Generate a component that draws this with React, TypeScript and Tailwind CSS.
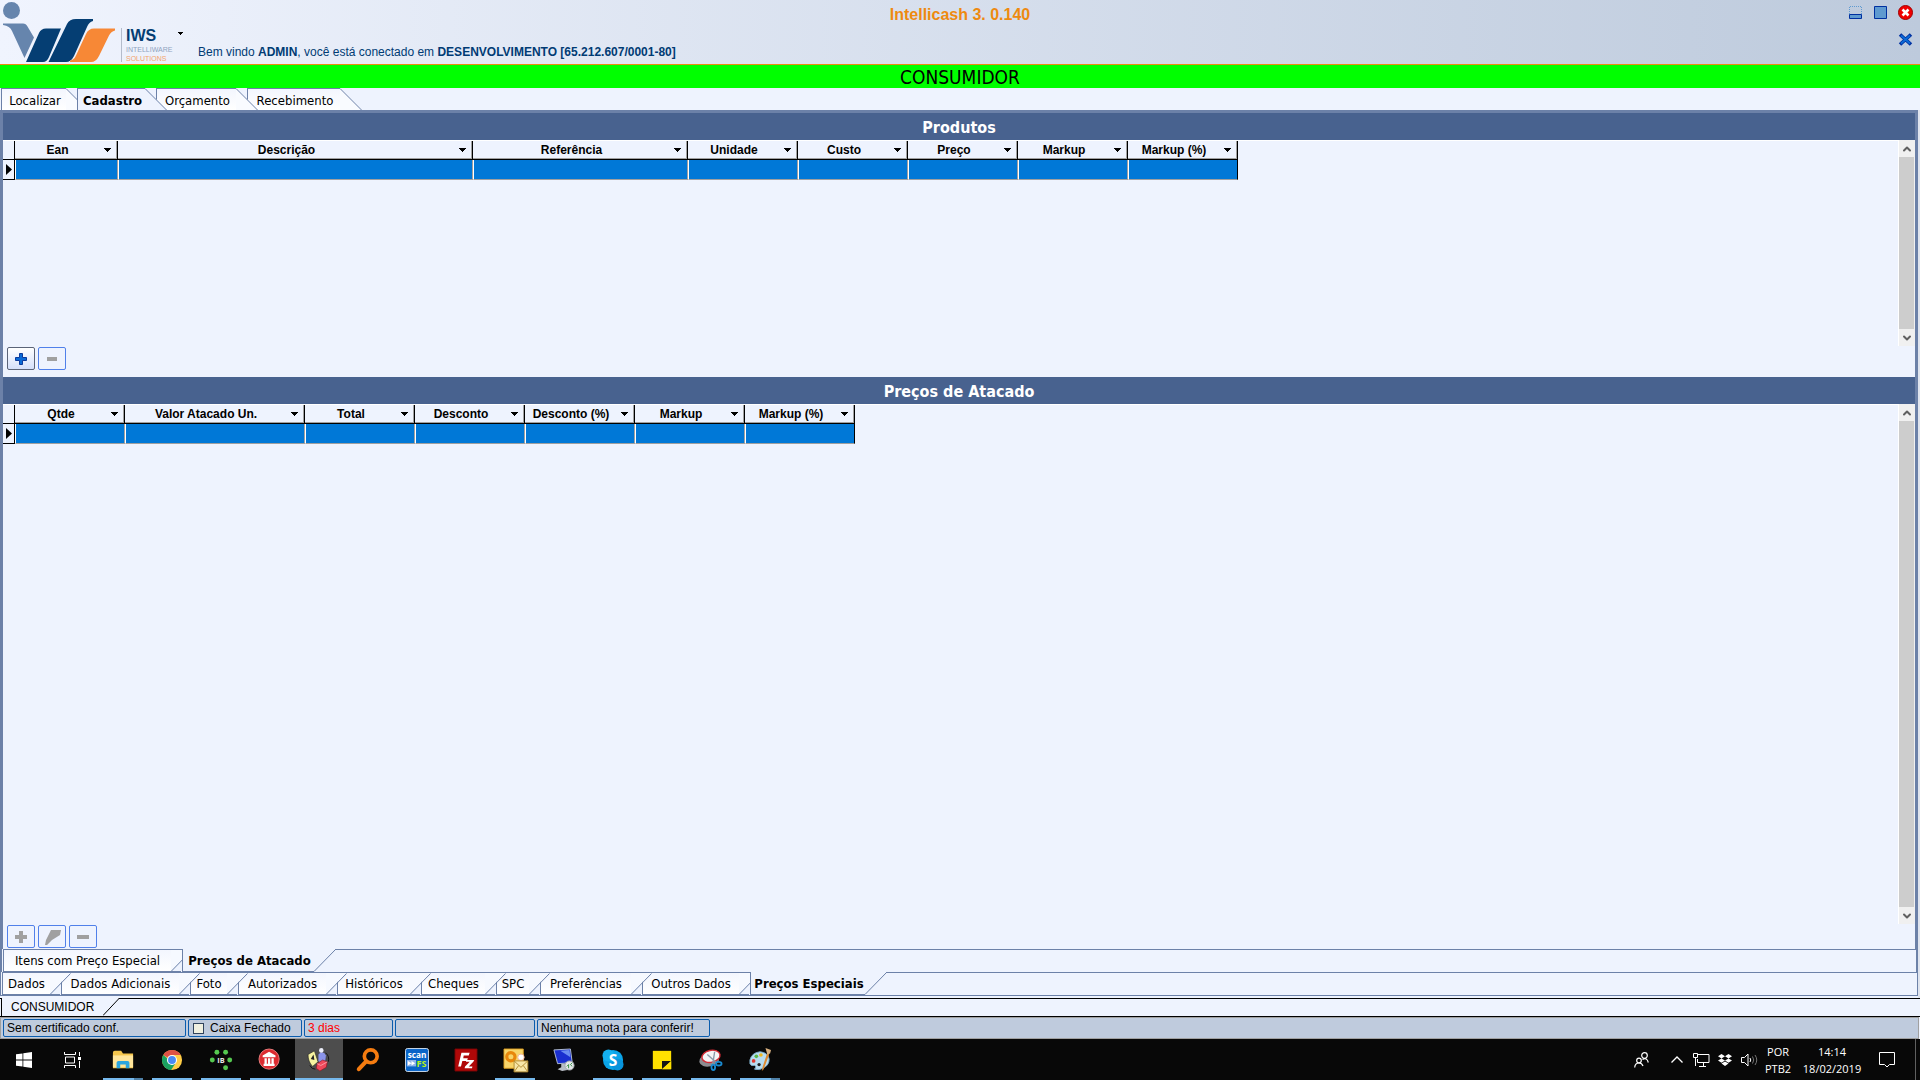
import { ChevronDown, ChevronUp } from "lucide-react";

type Tab = {
  label: string;
  width: string;
  layer?: string;
  active?: boolean;
};

type Column = {
  label: string;
  width: string;
};

const topTabs: Tab[] = [
  { label: "Localizar", width: "w-[65px]", layer: "z-10" },
  { label: "Cadastro", width: "w-[68px]", layer: "z-20", active: true },
  { label: "Orçamento", width: "w-[80px]", layer: "z-10" },
  { label: "Recebimento", width: "w-[93px]" },
];

const priceTabs: Tab[] = [
  { label: "Itens com Preço Especial", width: "w-[168px]" },
  { label: "Preços de Atacado", width: "w-[132px]", active: true },
];

const recordTabs: Tab[] = [
  { label: "Dados", width: "w-[48px]" },
  { label: "Dados Adicionais", width: "w-[118px]" },
  { label: "Foto", width: "w-[37px]" },
  { label: "Autorizados", width: "w-[88px]" },
  { label: "Históricos", width: "w-[73px]" },
  { label: "Cheques", width: "w-[64px]" },
  { label: "SPC", width: "w-[33px]" },
  { label: "Preferências", width: "w-[91px]" },
  { label: "Outros Dados", width: "w-[97px]" },
  { label: "Preços Especiais", width: "w-[115px]", active: true },
];

const productColumns: Column[] = [
  { label: "Ean", width: "w-[103px]" },
  { label: "Descrição", width: "w-[355px]" },
  { label: "Referência", width: "w-[215px]" },
  { label: "Unidade", width: "w-[110px]" },
  { label: "Custo", width: "w-[110px]" },
  { label: "Preço", width: "w-[110px]" },
  { label: "Markup", width: "w-[110px]" },
  { label: "Markup (%)", width: "w-[110px]" },
];

const wholesaleColumns: Column[] = [
  { label: "Qtde", width: "w-[110px]" },
  { label: "Valor Atacado Un.", width: "w-[180px]" },
  { label: "Total", width: "w-[110px]" },
  { label: "Desconto", width: "w-[110px]" },
  { label: "Desconto (%)", width: "w-[110px]" },
  { label: "Markup", width: "w-[110px]" },
  { label: "Markup (%)", width: "w-[110px]" },
];

export default function App() {
  return (
    <div className="flex h-screen flex-col overflow-hidden bg-[#eef3fe] font-['Liberation_Sans',Arial,sans-serif] text-xs text-black">
      <Header />

      <h1 className="h-[23px] shrink-0 bg-[#00ff00] text-center font-['DejaVu_Sans_Condensed','DejaVu_Sans',sans-serif] text-[19px] leading-[24px]">
        CONSUMIDOR
      </h1>

      <nav className="flex h-[22px] shrink-0 pl-px">
        {topTabs.map((tab) => (
          <TopTab key={tab.label} {...tab} />
        ))}
      </nav>

      {/* NESTED PAGES */}
      <main className="flex min-h-0 flex-1 flex-col border-r-2 border-[#dfe4ee] pb-[2px]">
        <div className="flex min-h-0 flex-1 flex-col border border-b-0 border-[#6c81a8]">
          <div className="flex min-h-0 flex-1 flex-col border border-b-0 border-[#6c81a8]">
            <div className="flex min-h-0 flex-1 flex-col border border-b-0 border-[#6c81a8]">
              <SectionTitle text="Produtos" />
              <div className="flex h-[206px] shrink-0">
                <DataGrid columns={productColumns} />
                <Scrollbar />
              </div>
              <div className="flex h-[31px] shrink-0 gap-[3px] pt-px pl-1">
                <ToolButton label="Incluir produto" enabled>
                  <path d="M5.500 1.500h3v4h4v3h-4v4h-3v-4h-4v-3h4z" fill="#0a6ad6" stroke="#0b3b9c" />
                </ToolButton>
                <ToolButton label="Excluir produto">
                  <path d="M2 5h10v4H2z" fill="#a0a0a0" />
                </ToolButton>
              </div>

              <SectionTitle text="Preços de Atacado" />
              <div className="flex min-h-0 flex-1">
                <DataGrid columns={wholesaleColumns} />
                <Scrollbar />
              </div>
              <div className="flex h-[25px] shrink-0 gap-[3px] pt-px pl-1">
                <ToolButton label="Incluir preço">
                  <path d="M5 1h4v4h4v4H9v4H5V9H1V5h4z" fill="#a0a0a0" />
                </ToolButton>
                <ToolButton label="Editar preço">
                  <path d="M6 0h10l-1 5-8 5-5 5H0l1-5z" fill="#a0a0a0" />
                </ToolButton>
                <ToolButton label="Excluir preço">
                  <path d="M1 5h12v4H1z" fill="#a0a0a0" />
                </ToolButton>
              </div>
            </div>
            <BottomTabs tabs={priceTabs} />
          </div>
          <BottomTabs tabs={recordTabs} />
          <div className="h-px shrink-0 bg-[#6c81a8]" />
        </div>
      </main>

      {/* OPEN WINDOWS */}
      <div className="flex h-[19px] shrink-0 border-y border-black">
        <button className="relative -mt-px ml-px h-[18px] w-[102px] border-l border-black bg-[#eef3fe] pl-[9px] text-left text-xs leading-[18px]">
          CONSUMIDOR
          <svg
            className="absolute top-0 left-full"
            width="16"
            height="18"
            viewBox="0 0 16 18"
          >
            <path d="M0 0H16L0 18z" fill="#eef3fe" />
            <path d="M0 17.500L16 .5" stroke="#000" />
          </svg>
        </button>
      </div>

      <StatusBar />
      <Taskbar />
    </div>
  );
}

function Header() {
  return (
    <header className="relative flex h-[65px] shrink-0 border-b border-[#ee8a10] bg-linear-to-r from-[#f0f4fe] to-[#bdcadc]">
      <Logo />
      <button
        aria-label="Menu"
        className="mt-[25px] flex h-4 w-5 items-center justify-center"
      >
        <svg width="5" height="3" viewBox="0 0 5 3" shapeRendering="crispEdges">
          <path d="M0 0h5L2.500 3z" />
        </svg>
      </button>

      <p className="ml-2 self-end pb-[4px] text-xs leading-[16px] text-[#003b74]">
        Bem vindo <b>ADMIN</b>, você está conectado em{" "}
        <b>DESENVOLVIMENTO [65.212.607/0001-80]</b>
      </p>

      <div className="absolute inset-x-0 top-1 text-center text-base leading-[22px] font-bold text-[#ee8a10]">
        Intellicash 3. 0.140
      </div>

      <div className="relative ml-auto grid auto-rows-min grid-cols-3 gap-x-[9px] gap-y-[10px] pt-1 pr-[6px]">
        <button aria-label="Minimizar">
          <svg width="16" height="16" viewBox="0 0 16 16">
            <path d="M1.500 10V2.500h12V10" fill="none" stroke="#5f9ad0" strokeDasharray="1 1" />
            <path d="M1.500 10.500h12v4h-12z" fill="#5f9ad0" stroke="#0030a0" />
          </svg>
        </button>
        <button aria-label="Restaurar">
          <svg width="16" height="16" viewBox="0 0 16 16">
            <path d="M1.500 2.500h12v12h-12z" fill="#5f9ad0" stroke="#0030a0" />
          </svg>
        </button>
        <button aria-label="Fechar">
          <svg width="16" height="16" viewBox="0 0 16 16">
            <circle cx="7.500" cy="8.500" r="7" fill="#f00000" stroke="#a00000" />
            <path d="M4.500 5.500l6 6m0-6l-6 6" stroke="#fff" strokeWidth="2.600" />
          </svg>
        </button>
        <button aria-label="Fechar janela" className="col-start-3">
          <svg width="16" height="16" viewBox="0 0 16 16">
            <path d="M2 4.500l11 10m0-10l-11 10" stroke="#0030a0" strokeWidth="3.600" />
            <path d="M3 5.500l9 8m0-8l-9 8" stroke="#0a6ad6" strokeWidth="1.800" />
          </svg>
        </button>
      </div>
    </header>
  );
}

function Logo() {
  return (
    <div className="flex w-[170px]">
      <svg className="shrink-0" width="122" height="64" viewBox="0 0 122 64">
        <circle cx="11.500" cy="10.500" r="8.500" fill="#6685ad" />
        <path d="M3 23.500H23q3 0 4.500 3L34 37.500 24.500 58 12 31q-2-5-9-6z" fill="#6685ad" />
        <path d="M46 28.500H61L49 57q-2 5-6 5H26L39 33q2-4.500 7-4.500z" fill="#053e73" />
        <path d="M76 19H93v2q-4 1-6 6L74 56q-3 6-8 6H48.500L67 24q2.500-5 9-5z" fill="#053e73" />
        <path d="M94 28.500H115v2q-4 1-6 5L99 56q-3 6-8 6H70v-1.500q4-.5 6-5L86 34q2.500-5.500 8-5.500z" fill="#f78836" />
        <path d="M121.500 28v34" stroke="#b4bccb" />
      </svg>
      <div className="ml-1 pt-[27px] whitespace-nowrap">
        <div className="text-base leading-[18px] font-bold text-[#053e73]">IWS</div>
        <div className="text-[7px] leading-[9px] text-[#8fa3c0]">INTELLIWARE</div>
        <div className="text-[7px] leading-[9px] text-[#f3a46c]">SOLUTIONS</div>
      </div>
    </div>
  );
}

function TopTab({ label, width, layer = "z-0", active }: Tab) {
  return (
    <button
      className={`relative mr-[11px] h-[22px] border-t border-l border-[#6c81a8] pl-[2px] text-center font-['DejaVu_Sans_Condensed','DejaVu_Sans',sans-serif] text-[13px] leading-[23px] whitespace-nowrap ${width} ${layer} ${
        active ? "bg-[#eef3fe] font-bold" : "bg-linear-to-b from-[#f3f6fe] to-white"
      }`}
    >
      <svg
        className="absolute -top-px left-full"
        width="22"
        height="22"
        viewBox="0 0 22 22"
      >
        <path d="M0 0L22 22H0z" fill={active ? "#eef3fe" : "#f9fbff"} />
        <path d="M0 .5L21.500 22" stroke="#6c81a8" fill="none" />
      </svg>
      <span className="relative">{label}</span>
    </button>
  );
}

function BottomTabs({ tabs }: { tabs: Tab[] }) {
  return (
    <nav className="flex h-[23px] shrink-0 pl-px">
      {tabs.map((tab) => (
        <div
          key={tab.label}
          className={`relative flex ${
            tab.active ? "z-10" : "border-t border-[#6c81a8] pr-[11px]"
          }`}
        >
          <button
            className={`h-full border-b border-l border-[#6c81a8] text-center font-['DejaVu_Sans_Condensed','DejaVu_Sans',sans-serif] text-[13px] leading-[21px] whitespace-nowrap ${tab.width} ${
              tab.active
                ? "bg-[#eef3fe] pt-px pl-[2px] font-bold"
                : "bg-linear-to-b from-[#f3f6fe] to-white"
            }`}
          >
            {tab.label}
          </button>
          <SlantUp active={tab.active} />
        </div>
      ))}
      <div className="ml-[21px] flex-1 border-t border-[#6c81a8]" />
    </nav>
  );
}

// the slant of a tab runs over the left edge of the tab that follows it
function SlantUp({ active }: { active?: boolean }) {
  return active ? (
    <svg
      className="absolute top-0 left-full"
      width="22"
      height="23"
      viewBox="0 0 22 23"
    >
      <path d="M0 0H21L0 22z" fill="#eef3fe" />
      <path d="M0 22.500L21.500 .5" stroke="#6c81a8" />
    </svg>
  ) : (
    <svg
      className="absolute top-0 right-[-10px] z-[5]"
      width="21"
      height="22"
      viewBox="0 0 21 22"
    >
      <path d="M0 0H20L0 21z" fill="#f6f9ff" />
      <path d="M10 11L0 21.500V22H10z" fill="#eef3fe" />
      <path d="M0 21.500L20.500 .5M0 21.500H10" stroke="#6c81a8" />
    </svg>
  );
}

function SectionTitle({ text }: { text: string }) {
  return (
    <h2 className="h-[27px] shrink-0 bg-[#48628f] text-center font-['DejaVu_Sans_Condensed','DejaVu_Sans',sans-serif] text-base leading-[29px] font-bold text-white">
      {text}
    </h2>
  );
}

function DataGrid({ columns }: { columns: Column[] }) {
  return (
    <div className="min-w-0 flex-1 overflow-hidden border-t border-r border-white">
      <table className="w-0 table-fixed border-separate border-spacing-0">
        <thead>
          <tr>
            <th aria-label="Seleção" className="h-[19px] w-3 border-r border-b border-black" />
            {columns.map((column) => (
              <th
                key={column.label}
                className={`h-[19px] border-r border-b border-black p-0 ${column.width}`}
              >
                <div className="flex h-[18px] items-center border-r border-b border-[#a0a0a0] pr-[5px]">
                  <span className="flex-1 pr-1 text-center text-xs leading-[18px] whitespace-nowrap">
                    {column.label}
                  </span>
                  <button aria-label={`Filtrar ${column.label}`}>
                    <svg width="7" height="4" viewBox="0 0 7 4" shapeRendering="crispEdges">
                      <path d="M0 0h7L3.500 4z" />
                    </svg>
                  </button>
                </div>
              </th>
            ))}
          </tr>
        </thead>
        <tbody>
          <tr>
            <td className="h-5 border-r border-b border-black p-0">
              <svg className="ml-[3px]" width="6" height="11" viewBox="0 0 6 11">
                <path d="M0 0l6 5.500L0 11z" />
              </svg>
            </td>
            {columns.map((column) => (
              <td
                key={column.label}
                className="h-5 border-r border-b border-l border-[#a0a0a0] border-l-white bg-[#0078d7] p-0 last:border-r-black"
              />
            ))}
          </tr>
        </tbody>
      </table>
    </div>
  );
}

function Scrollbar() {
  return (
    <div className="flex w-4 shrink-0 flex-col bg-[#f0f0f0] text-[#606060]">
      <button aria-label="Rolar para cima" className="flex h-[17px] items-center justify-center pt-px pr-px">
        <ChevronUp size={12} strokeWidth={4} />
      </button>
      <div className="mr-px flex-1 bg-[#cdcdcd]" />
      <button aria-label="Rolar para baixo" className="flex h-[17px] items-center justify-center pt-px pr-px">
        <ChevronDown size={12} strokeWidth={4} />
      </button>
    </div>
  );
}

function ToolButton({
  label,
  enabled,
  children,
}: {
  label: string;
  enabled?: boolean;
  children: React.ReactNode;
}) {
  return (
    <button
      aria-label={label}
      disabled={!enabled}
      className={`flex h-[23px] w-7 items-center justify-center rounded-[2px] border ${
        enabled
          ? "border-[#5b6478] bg-linear-to-b from-white to-[#d5e0fa]"
          : "border-[#5080ea]"
      }`}
    >
      <svg className="overflow-visible" width="14" height="14" viewBox="0 0 14 14">
        {children}
      </svg>
    </button>
  );
}

function StatusBar() {
  const box = "flex h-[18px] items-center rounded-[2px] border border-[#0a5cad] px-[3px]";

  return (
    <footer className="mr-px flex h-[22px] shrink-0 gap-[2px] border border-[#a0a0a0] bg-[#bfcbdd] py-px pl-[2px]">
      <div className={`${box} w-[183px]`}>Sem certificado conf.</div>
      <label className={`${box} w-[114px] gap-[6px]`}>
        <input
          type="checkbox"
          className="ml-px size-[11px] appearance-none border border-[#30435c] bg-[#f0f0e0]"
        />
        Caixa Fechado
      </label>
      <div className={`${box} w-[89px] text-[#ff0000]`}>3 dias</div>
      <div className={`${box} w-[140px]`} />
      <div className={`${box} w-[173px]`}>Nenhuma nota para conferir!</div>
    </footer>
  );
}

type App = {
  name: string;
  icon: React.ReactNode;
  running?: boolean;
  active?: boolean;
  grouped?: boolean;
};

const apps: App[] = [
  {
    name: "Explorador de Arquivos",
    running: true,
    grouped: true,
    icon: (
      <>
        <path d="M1 4q0-2 2-2h7l2 3h11v16H1z" fill="#f5c64c" />
        <path d="M1 7h22v13H1z" fill="#ffe59a" />
        <path d="M5 21v-6q0-2 2-2h10q2 0 2 2v6h-4v-4H9v4z" fill="#2ba6e0" />
      </>
    ),
  },
  {
    name: "Chrome",
    running: true,
    icon: (
      <>
        <circle cx="12" cy="12" r="11" fill="#ffcd46" />
        <path d="M12 12L2.500 6.500A11 11 0 0 1 21.500 6.500H12z" fill="#de5246" />
        <path d="M2.500 6.500A11 11 0 0 0 11 23l5.500-8.500H12z" fill="#1aa260" />
        <circle cx="12" cy="12" r="5.500" fill="#fff" />
        <circle cx="12" cy="12" r="4.300" fill="#4a8af4" />
      </>
    ),
  },
  {
    name: "IB",
    running: true,
    icon: (
      <>
        <g fill="#55c850">
          <circle cx="7.500" cy="3.500" r="2.700" />
          <circle cx="17" cy="3.500" r="2.700" />
          <circle cx="2.500" cy="12" r="2.700" />
          <circle cx="21.500" cy="12" r="2.700" />
          <circle cx="17" cy="20.500" r="2.700" />
        </g>
        <text x="12" y="15" textAnchor="middle" fontSize="8" fontWeight="700" fill="#e8e8e8">
          IB
        </text>
      </>
    ),
  },
  {
    name: "Banco",
    running: true,
    icon: (
      <>
        <circle cx="11" cy="11" r="11" fill="#dc2b30" stroke="#f08080" />
        <path d="M11 3l7 4v2H4V7zM6 10h2.500v6H6zM9.800 10h2.500v6H9.800zM13.600 10h2.500v6h-2.500zM5 16h12v2.500H5z" fill="#fff" />
      </>
    ),
  },
  {
    name: "Intellicash",
    running: true,
    active: true,
    icon: (
      <>
        <path d="M0 6l7-4 4 12-6 5Q0 14 0 6z" fill="#f7f3a0" stroke="#222" strokeWidth=".7" />
        <path d="M6 6l1 6-4-1z" fill="#222" />
        <path d="M11 6l3-3 4 1 2 3-1 8-5 1-3-3z" fill="#8a94ea" stroke="#444" strokeWidth=".7" />
        <circle cx="14.500" cy="1.500" r="2.500" fill="#eceefa" />
        <path d="M10 16l6-4 5 2-1 6-7 4-4-3z" fill="#f0485a" stroke="#8c1420" strokeWidth=".7" />
        <path d="M10 16l4 2 7-4" fill="none" stroke="#f9a0a8" />
        <path d="M19 4q5 4 3 10M2 18q2 4 6 4" fill="none" stroke="#111" />
      </>
    ),
  },
  {
    name: "Pesquisar",
    icon: (
      <g fill="none" stroke="#f57c10" strokeLinecap="round">
        <circle cx="15" cy="8" r="7" strokeWidth="4" />
        <path d="M9.500 14L2 22" strokeWidth="4.500" />
      </g>
    ),
  },
  {
    name: "scanFS",
    icon: (
      <>
        <rect x="-.5" y="-.5" width="25" height="25" rx="2" fill="#0864c8" stroke="#dce8f4" />
        <text x="12" y="10" textAnchor="middle" fontSize="9" fontWeight="700" fill="#fff">
          scan
        </text>
        <path d="M1 12h10v7H1z" fill="#8fb4ea" />
        <path d="M2 13l4 2.500L2 18zm4 0l4 2.500L6 18z" fill="#fff" />
        <text x="17" y="20" textAnchor="middle" fontSize="10" fontWeight="700" fill="#b8f020">
          FS
        </text>
      </>
    ),
  },
  {
    name: "FileZilla",
    icon: (
      <>
        <path d="M0 0h24v24H0z" fill="#b00808" stroke="#7c0404" />
        <path d="M7 4h9l-1 3H9.500L9 10h5l-1 3H8l-1.500 6H3.500zM12 12h9l-1 2-5 5h4l-.5 2h-8l.5-2 5-5h-4z" fill="#fff" />
      </>
    ),
  },
  {
    name: "Outlook",
    running: true,
    icon: (
      <>
        <path d="M0 0h21v21H0z" fill="#f7d56a" stroke="#e0a020" />
        <circle cx="7.500" cy="8.500" r="4.500" fill="none" stroke="#e8870c" strokeWidth="3.500" />
        <circle cx="18.500" cy="9" r="3.500" fill="#fff" stroke="#f0b090" />
        <path d="M11 13h15v12H11z" fill="#f7e6a8" stroke="#b08a30" />
        <path d="M11 13l7.500 7 7.500-7M11 25l5-7m10 7l-5-7" fill="none" stroke="#b08a30" />
      </>
    ),
  },
  {
    name: "Área de Trabalho Remota",
    icon: (
      <>
        <path d="M1 1l18-1 2 15-16 1z" fill="#1a2fd0" stroke="#b8c4d8" />
        <path d="M8 2l10-1 1 8z" fill="#6a8cf0" />
        <path d="M9 16h6l1 4 4 2-10 2-5-2 4-2z" fill="#b9bec6" />
        <circle cx="18" cy="18" r="5" fill="#e4e6e8" stroke="#a0a4a8" />
        <path d="M15 19l2-2v4m4-6l-2 2 2 2" fill="none" stroke="#2e8f3c" />
      </>
    ),
  },
  {
    name: "Skype",
    running: true,
    icon: (
      <>
        <circle cx="12" cy="12" r="11" fill="#0aa4e8" />
        <circle cx="7" cy="7" r="6.500" fill="#14b0f0" />
        <circle cx="17" cy="17" r="6.500" fill="#0894dc" />
        <text x="12" y="18" textAnchor="middle" fontSize="17" fontWeight="700" fill="#fff">
          S
        </text>
      </>
    ),
  },
  {
    name: "Notas Autoadesivas",
    running: true,
    icon: (
      <>
        <path d="M2 2h20v20H2z" fill="#ffe100" />
        <path d="M12 22v-9h10z" fill="#151515" />
        <path d="M22 13v9H12z" fill="#ffe100" />
      </>
    ),
  },
  {
    name: "Ferramenta de Captura",
    running: true,
    icon: (
      <>
        <ellipse cx="10" cy="12" rx="11" ry="7" fill="#8c8c90" transform="rotate(-12 10 12)" />
        <ellipse cx="12" cy="8" rx="10" ry="6.500" fill="#f4f4f6" stroke="#d42a34" strokeWidth="1.500" transform="rotate(-12 12 8)" />
        <path d="M8 6l10 9M16 3l-2 13" stroke="#8a98a8" strokeWidth="1.500" />
        <g fill="none" stroke="#1a8ad0" strokeWidth="2">
          <ellipse cx="14.500" cy="20" rx="2" ry="3" />
          <ellipse cx="20.500" cy="16" rx="3" ry="2" />
        </g>
      </>
    ),
  },
  {
    name: "Paint",
    running: true,
    grouped: true,
    icon: (
      <>
        <path d="M1 12q2-8 11-9 9 1 10 8 0 6-5 9-6 4-11 2 3-3 0-4-4 1-5-2z" fill="#b7dcf0" stroke="#7aa8c4" />
        <circle cx="5" cy="13" r="2" fill="#e03a30" />
        <circle cx="8" cy="8" r="2" fill="#58b848" />
        <circle cx="13" cy="6.500" r="2" fill="#f0b820" />
        <circle cx="11" cy="17" r="1.800" fill="#222" />
        <path d="M20 4l2 2-6 16-2 2 1-5z" fill="#e08a30" />
        <path d="M18-1l6 2-1 4-3 1z" fill="#d8b080" />
      </>
    ),
  },
];

function Taskbar() {
  return (
    <div className="flex h-[41px] shrink-0 items-stretch bg-[#080808] font-['Open_Sans','Noto_Sans',sans-serif] text-white">
      <button aria-label="Iniciar" className="flex w-12 items-center justify-center">
        <svg width="16" height="16" viewBox="0 0 16 16" fill="#fff">
          <path d="M0 2.300L6.500 1.400V7.600H0zM7.300 1.300L16 0V7.600H7.300zM0 8.400H6.500v6.200L0 13.700zM7.300 8.400H16V16l-8.700-1.300z" />
        </svg>
      </button>
      <button aria-label="Visão de Tarefas" className="flex w-12 items-center justify-center">
        <svg width="17" height="16" viewBox="0 0 17 16" fill="none" stroke="#fff">
          <path d="M.5 0v2.500h11V0M.5 16v-2.500h11V16M1.500 5h9v6h-9zM15.500 0v4M15.500 9v7" />
          <path d="M14 5h3v3h-3z" fill="#fff" stroke="none" />
        </svg>
      </button>

      {/* APPS */}
      <div className="ml-[3px] flex gap-px">
        {apps.map((app) => (
          <button
            key={app.name}
            aria-label={app.name}
            className={`relative flex w-12 items-center justify-center ${
              app.active ? "bg-[#4d4d4d]" : ""
            }`}
          >
            <svg className="overflow-visible" width="22" height="22" viewBox="0 0 24 24">
              {app.icon}
            </svg>
            {app.running && (
              <span
                className={`absolute bottom-0 h-[2px] border-[#4f81a8] bg-[#76b9ed] ${
                  app.active ? "inset-x-0" : "inset-x-1"
                } ${app.grouped ? "border-r-[9px]" : ""}`}
              />
            )}
          </button>
        ))}
      </div>

      {/* TRAY */}
      <div className="ml-auto flex items-center text-center text-[11px] leading-[17px]">
        <button aria-label="Pessoas" className="flex w-12 justify-center">
          <svg width="15" height="16" viewBox="0 0 15 16" fill="none" stroke="#fff" strokeWidth="1.200">
            <circle cx="10.500" cy="3.500" r="2.800" />
            <circle cx="5" cy="8.500" r="2.300" />
            <path d="M.7 15.500q.3-4.500 4.300-4.500 3 0 4 3M8.500 7.500q4.500-2.500 5.800 3" />
          </svg>
        </button>
        <button aria-label="Mostrar ícones ocultos" className="flex w-6 justify-center">
          <svg width="12" height="7" viewBox="0 0 12 7" fill="none" stroke="#fff" strokeWidth="1.300">
            <path d="M.5 6.500L6 1l5.500 5.500" />
          </svg>
        </button>
        <button aria-label="Rede" className="flex w-6 justify-center">
          <svg width="17" height="14" viewBox="0 0 17 14" fill="none" stroke="#fff">
            <path d="M5 1.500h11v8H4.500V6M.5.500h4v4h-4zM2.500 5v8M10.500 10v3M6 13.500h7" />
          </svg>
        </button>
        <button aria-label="Dropbox" className="flex w-6 justify-center">
          <svg width="14" height="12" viewBox="0 0 14 12" fill="#fff">
            <path d="M3.500 0L7 2.200 3.500 4.400 0 2.200zM10.500 0L14 2.200l-3.500 2.200L7 2.200zM3.500 4.400L7 6.600 3.500 8.800 0 6.600zM10.500 4.400L14 6.600l-3.500 2.200L7 6.600zM3.500 9.600L7 7.500l3.500 2.100L7 12z" />
          </svg>
        </button>
        <button aria-label="Volume" className="flex w-6 justify-center">
          <svg width="17" height="14" viewBox="0 0 17 14" fill="none" stroke="#fff">
            <path d="M.5 4.500h3L7 1v12L3.500 9.500h-3z" />
            <path d="M9 5q1.500 2 0 4" />
            <path d="M11.500 3.500q2.500 3.500 0 7M14 2q3.500 5 0 10" stroke="#777" />
          </svg>
        </button>
        <button className="w-[34px]">
          POR
          <br />
          PTB2
        </button>
        <button className="w-[74px]">
          14:14
          <br />
          18/02/2019
        </button>
        <button aria-label="Central de Ações" className="mr-[20px] ml-[10px] flex w-4 justify-center">
          <svg width="16" height="16" viewBox="0 0 16 16" fill="none" stroke="#fff">
            <path d="M.5 .5h15v12H10.500L8 15 5.500 12.500H.5z" />
          </svg>
        </button>
        <span className="h-full w-[5px] border-l border-[#606060]" />
      </div>
    </div>
  );
}
